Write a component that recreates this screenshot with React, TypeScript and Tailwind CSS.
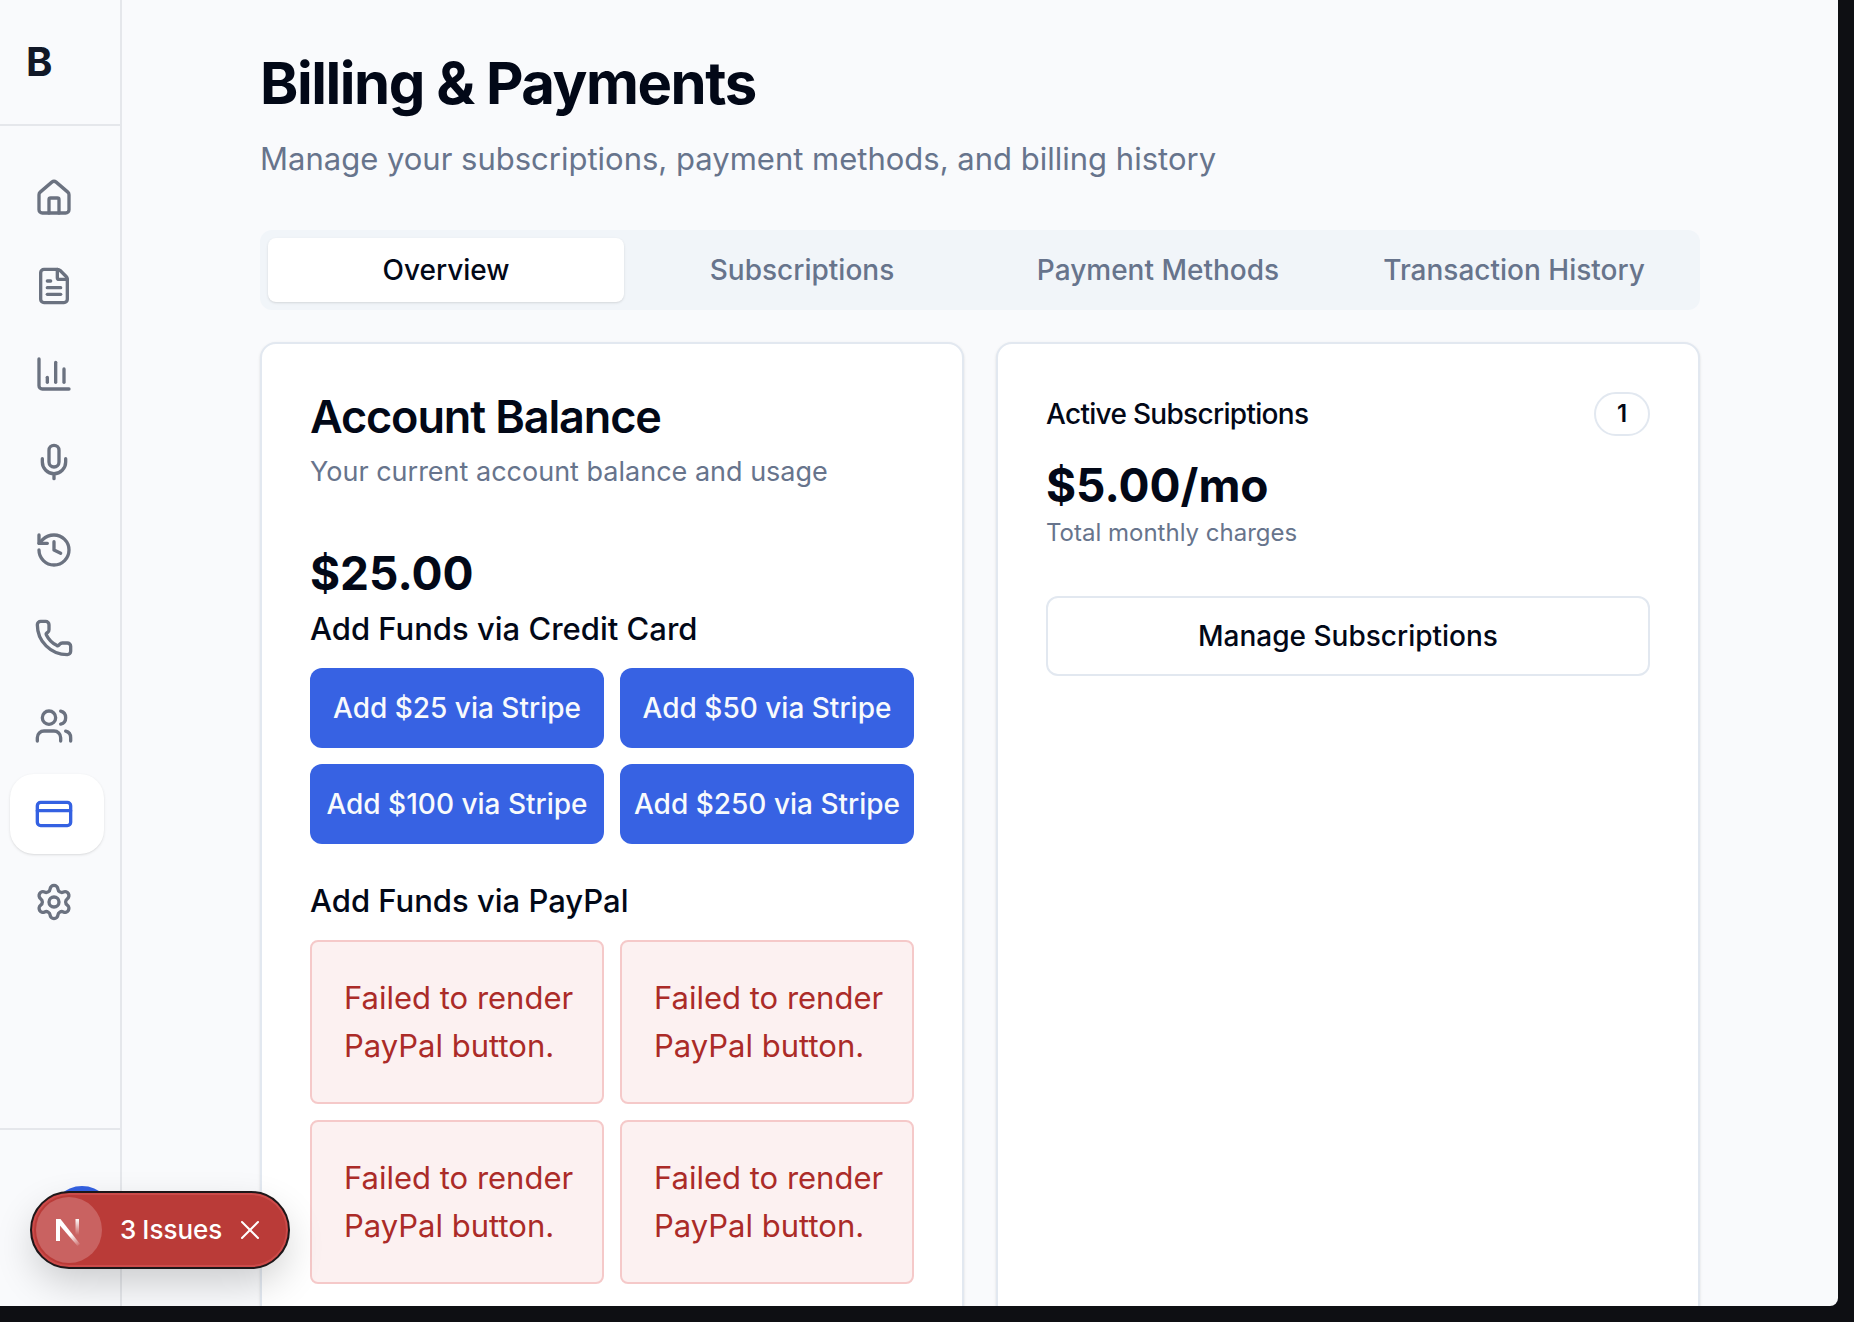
import { useState } from 'react';
import {
  ChartColumn,
  CreditCard,
  FileText,
  History,
  House,
  Mic,
  Phone,
  Settings,
  Users,
  X,
} from 'lucide-react';

const navItems = [
  { label: 'Home', icon: House },
  { label: 'Documents', icon: FileText },
  { label: 'Analytics', icon: ChartColumn },
  { label: 'Voice', icon: Mic },
  { label: 'History', icon: History },
  { label: 'Calls', icon: Phone },
  { label: 'Team', icon: Users },
  { label: 'Billing', icon: CreditCard, active: true },
  { label: 'Settings', icon: Settings },
];

const tabs = ['Overview', 'Subscriptions', 'Payment Methods', 'Transaction History'];
const amounts = [25, 50, 100, 250];

function Sidebar() {
  return (
    <aside className="flex w-[122px] shrink-0 flex-col border-r-2 border-[#e5e7eb]">
      <div className="flex h-[126px] shrink-0 items-center border-b-2 border-[#e5e7eb] px-[26px] text-[40px] font-bold text-[#111827]">
        B
      </div>
      <nav className="flex flex-1 flex-col gap-2 px-[10px] pt-8">
        {navItems.map(({ label, icon: Icon, active }) => (
          <a
            key={label}
            href="#"
            aria-label={label}
            aria-current={active ? 'page' : undefined}
            className={
              active
                ? 'flex h-20 w-[94px] items-center rounded-3xl bg-white px-6 text-[#3461e2] shadow-sm'
                : 'flex h-20 w-[94px] items-center rounded-3xl px-6 text-[#6b7280]'
            }
          >
            <Icon size={40} strokeWidth={2} />
          </a>
        ))}
      </nav>
      <div className="flex h-[178px] shrink-0 items-center justify-end border-t-2 border-[#e5e7eb] pr-[6px]">
        <div className="size-16 rounded-full bg-[#3461e2]" />
      </div>
    </aside>
  );
}

function BalanceCard() {
  return (
    <section className="rounded-2xl border-2 border-[#e2e8f0] bg-white p-12 shadow-sm">
      <h2 className="text-[45px] leading-[50px] font-semibold tracking-tight">Account Balance</h2>
      <p className="mt-[10px] text-[27px] leading-10 text-[#67748c]">
        Your current account balance and usage
      </p>
      <p className="mt-12 text-[46px] leading-[66px] font-bold">$25.00</p>
      <h3 className="text-[31px] leading-[46px] font-medium">Add Funds via Credit Card</h3>
      <div className="mt-4 grid grid-cols-2 gap-4">
        {amounts.map((amount) => (
          <button
            key={amount}
            type="button"
            className="h-20 rounded-xl bg-[#3762e3] text-[28px] font-medium whitespace-nowrap text-[#f8fafc]"
          >
            {`Add $${amount} via Stripe`}
          </button>
        ))}
      </div>
      <h3 className="mt-[34px] text-[31px] leading-[46px] font-medium">Add Funds via PayPal</h3>
      <div className="mt-4 grid grid-cols-2 gap-4">
        {amounts.map((amount) => (
          <div
            key={amount}
            role="alert"
            className="rounded-lg border-2 border-[#f5c9c9] bg-[#fcf1f1] py-8 pr-4 pl-8 text-[31px] leading-[48px] text-[#ab2b28]"
          >
            Failed to render PayPal button.
          </div>
        ))}
      </div>
    </section>
  );
}

function SubscriptionsCard() {
  return (
    <section className="rounded-2xl border-2 border-[#e2e8f0] bg-white p-12 shadow-sm">
      <div className="flex items-center justify-between">
        <h2 className="text-[28px] leading-10 font-medium tracking-tight">Active Subscriptions</h2>
        <span className="flex h-11 w-14 items-center justify-center rounded-full border-2 border-[#e2e8f0] text-[24px] font-semibold">
          1
        </span>
      </div>
      <p className="mt-4 text-[46px] leading-[66px] font-bold">$5.00/mo</p>
      <p className="text-[24px] leading-[30px] text-[#67748c]">Total monthly charges</p>
      <button
        type="button"
        className="mt-12 h-20 w-full rounded-xl border-2 border-[#e2e8f0] bg-white text-[28px] font-medium"
      >
        Manage Subscriptions
      </button>
    </section>
  );
}

function IssuesPill({ onClose }: { onClose: () => void }) {
  return (
    <div className="absolute bottom-[37px] left-[30px] flex h-[78px] w-[260px] items-center rounded-full border-2 border-[#1d1719] bg-[#ba3b38] pl-1 text-white shadow-[inset_0_0_0_2px_#cc4b4a,0_16px_40px_-4px_rgba(0,0,0,0.2)]">
      <span className="flex size-[66px] items-center justify-center rounded-full bg-[#c96261]">
        <svg width="28" height="32" viewBox="0 0 28 32" fill="none" aria-hidden="true">
          <defs>
            <linearGradient id="stem" x1="0" y1="5" x2="0" y2="21" gradientUnits="userSpaceOnUse">
              <stop stopColor="#fff" />
              <stop offset="1" stopColor="#fff" stopOpacity="0" />
            </linearGradient>
            <linearGradient id="diagonal" x1="17" y1="20" x2="25" y2="32" gradientUnits="userSpaceOnUse">
              <stop stopColor="#fff" />
              <stop offset="1" stopColor="#fff" stopOpacity="0" />
            </linearGradient>
          </defs>
          <path d="M1 5h4v22H1z" fill="#fff" />
          <path d="M1 5h4.500L25 30l-2.500 2L1 7z" fill="url(#diagonal)" />
          <path d="M20.500 5h3.500v17h-3.500z" fill="url(#stem)" />
        </svg>
      </span>
      <span className="ml-[18px] flex gap-[6px] text-[26px] leading-8 font-medium">
        <span>3</span>
        <span>Issues</span>
      </span>
      <button type="button" aria-label="Close" onClick={onClose} className="ml-3">
        <X size={32} strokeWidth={2} absoluteStrokeWidth />
      </button>
    </div>
  );
}

export default function App() {
  const [tab, setTab] = useState('Overview');
  const [showIssues, setShowIssues] = useState(true);

  return (
    <div className="h-screen overflow-hidden bg-[#0e0f13] pr-4 pb-4 font-['Inter',sans-serif] text-[#020817]">
      <div className="relative flex h-full overflow-hidden rounded-br-lg bg-[#f9fafc]">
        <Sidebar />
        <main className="min-w-0 flex-1 overflow-hidden px-8 pt-[46px]">
          <div className="mx-auto max-w-[1440px]">
            <h1 className="text-[58px] leading-[74px] font-bold tracking-tight">
              Billing &amp; Payments
            </h1>
            <p className="mt-4 text-[31px] leading-[46px] text-[#67748c]">
              Manage your subscriptions, payment methods, and billing history
            </p>
            <div role="tablist" className="mt-12 grid grid-cols-4 rounded-xl bg-[#f1f5f9] p-2">
              {tabs.map((name) => (
                <button
                  key={name}
                  type="button"
                  role="tab"
                  aria-selected={name === tab}
                  onClick={() => setTab(name)}
                  className={
                    name === tab
                      ? 'h-16 rounded-lg bg-white text-[28px] font-medium whitespace-nowrap shadow-sm'
                      : 'h-16 rounded-lg text-[28px] font-medium whitespace-nowrap text-[#67748c]'
                  }
                >
                  {name}
                </button>
              ))}
            </div>
            <div className="mt-8 grid grid-cols-2 gap-8">
              <BalanceCard />
              <SubscriptionsCard />
            </div>
          </div>
        </main>
        {showIssues && <IssuesPill onClose={() => setShowIssues(false)} />}
      </div>
    </div>
  );
}
